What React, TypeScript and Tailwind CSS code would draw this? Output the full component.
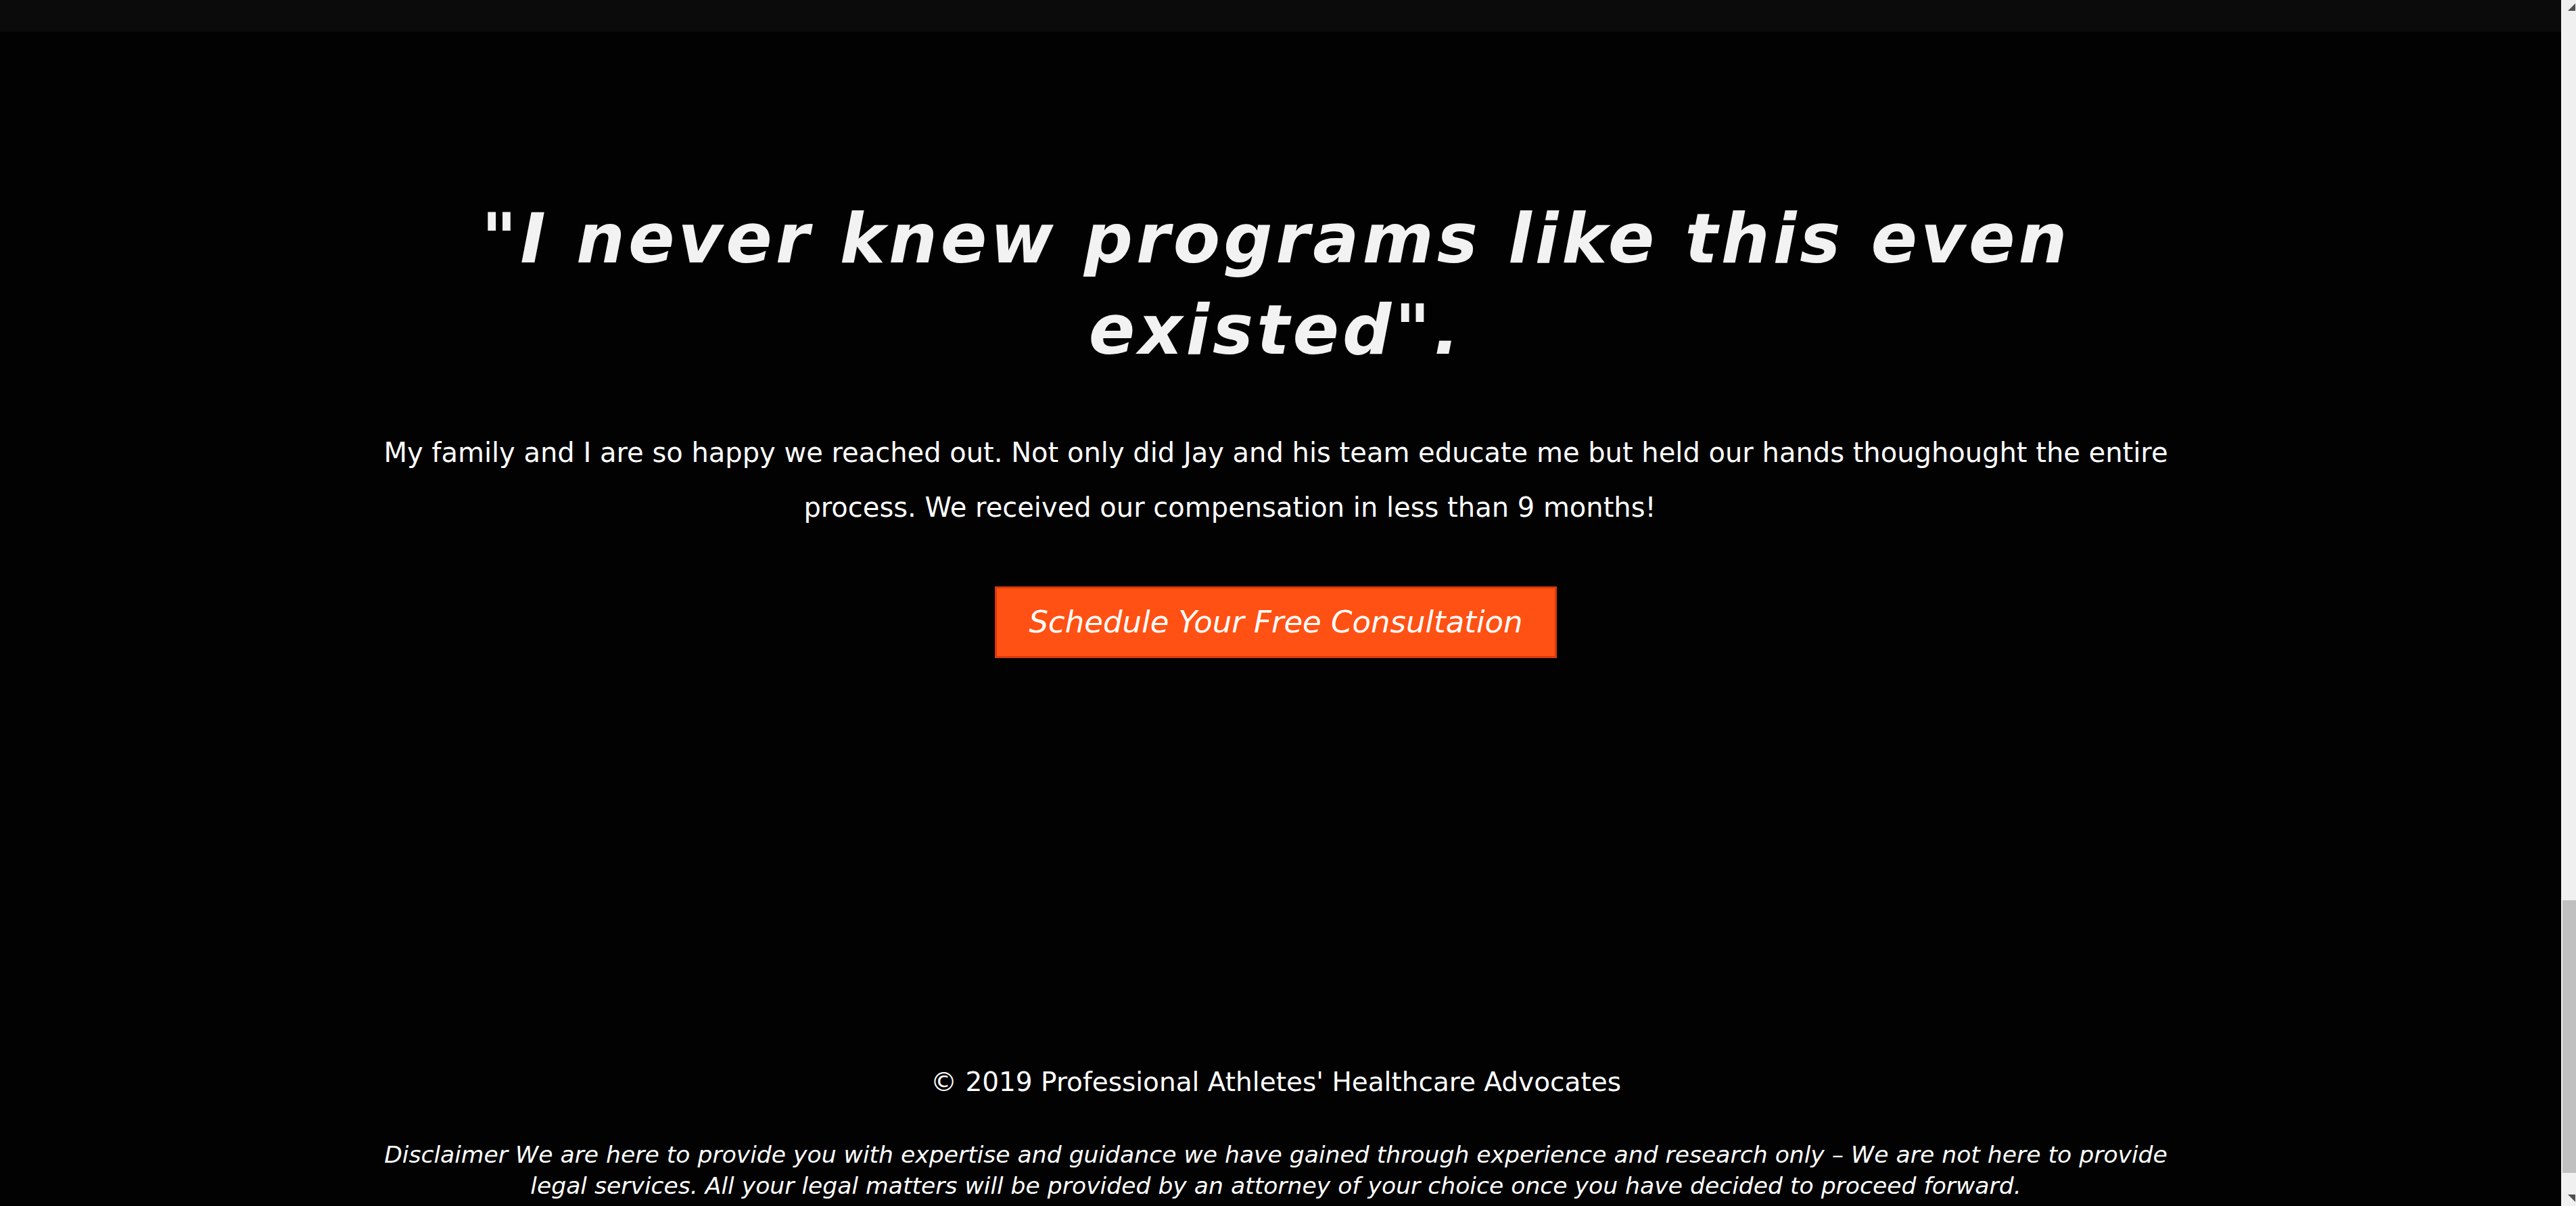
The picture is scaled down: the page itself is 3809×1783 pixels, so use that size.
export default function App() {
  return (
    <div className="flex min-h-[1783px] w-full bg-[#020202] font-['DejaVu_Sans',sans-serif]">
      <div className="flex min-w-0 flex-1 flex-col pr-[14px]">
        {/* top nav strip */}
        <div className="-mr-[14px] h-[47px] bg-[#0b0b0b]" />

        <section className="mx-auto flex w-full max-w-[2680px] flex-col items-center pt-[239px] text-center">
          <h2 className="text-[101px] font-bold italic leading-[135px] tracking-[5px] text-[#f2f2f2]">
            "I never knew programs like this even existed".
          </h2>
          <p className="mt-[73px] text-[40px] leading-[81px] text-white">
            My family and I are so happy we reached out. Not only did Jay and his team educate me but held our hands thoughought the entire process. We received our compensation in less than 9 months!
            <span aria-hidden="true" className="inline-block w-[136px]" />
          </p>
          <a
            href="#"
            className="mt-[76px] flex h-[106px] items-center justify-center border-[3px] border-[#d83a0b] bg-[#ff5113] px-[48px] text-[45px] italic text-white"
          >
            Schedule Your Free Consultation
          </a>
        </section>

        <footer className="mx-auto mt-[598px] flex w-full max-w-[2680px] flex-col items-center text-center text-white">
          <p className="text-[39px] leading-[57px]">© 2019 Professional Athletes' Healthcare Advocates</p>
          <p className="mt-[56px] text-[34.6px] italic leading-[46px]">
            Disclaimer We are here to provide you with expertise and guidance we have gained through experience and research only – We are not here to provide legal services. All your legal matters will be provided by an attorney of your choice once you have decided to proceed forward.
          </p>
        </footer>
      </div>

      {/* scrollbar */}
      <div className="flex w-[22px] shrink-0 flex-col bg-[#f0f0f0] pl-[2px]">
        <div className="flex h-[20px] items-center justify-end pr-[1px]">
          <svg width="11" height="11" viewBox="0 0 11 11">
            <path d="M0 11 L11 0 L11 11 Z" fill="#505050" />
          </svg>
        </div>
        <div className="flex-1" />
        <div className="h-[403px] bg-[#c0c0c0]" />
        <div className="flex h-[49px] items-end justify-end pb-[6px] pr-[1px]">
          <svg width="11" height="11" viewBox="0 0 11 11">
            <path d="M0 0 L11 0 L11 11 Z" fill="#505050" />
          </svg>
        </div>
      </div>
    </div>
  );
}
